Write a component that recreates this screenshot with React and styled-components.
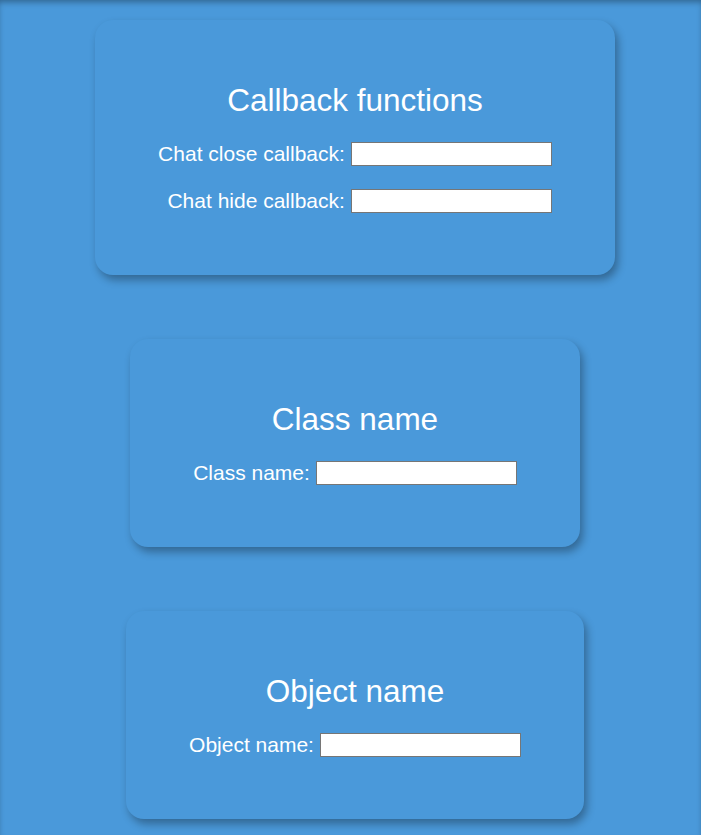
import React from "react";
import styled, { createGlobalStyle } from "styled-components";

const GlobalStyle = createGlobalStyle`
  html, body {
    margin: 0;
    padding: 0;
    background: #4a99da;
    font-family: "Liberation Sans", Arial, sans-serif;
  }
`;

const sections = [
  {
    title: "Callback functions",
    fields: ["Chat close callback:", "Chat hide callback:"],
  },
  { title: "Class name", fields: ["Class name:"] },
  { title: "Object name", fields: ["Object name:"] },
];

export default function App() {
  return (
    <Page>
      <GlobalStyle />
      {sections.map((s) => (
        <Card key={s.title}>
          <Title>{s.title}</Title>
          <Fields>
            {s.fields.map((f) => (
              <React.Fragment key={f}>
                <Label>{f}</Label>
                <Input type="text" />
              </React.Fragment>
            ))}
          </Fields>
        </Card>
      ))}
    </Page>
  );
}

const Page = styled.div`
  min-height: 835px;
  box-sizing: border-box;
  padding: 20px 0 16px 9px;
  display: flex;
  flex-direction: column;
  align-items: center;
  gap: 64px;
  background: #4a99da;
  box-shadow: inset 0 4px 6px -2px rgba(0, 0, 0, 0.35);
`;

const Card = styled.div`
  box-sizing: border-box;
  padding: 62px 63px 62px;
  border-radius: 18px;
  background: #4a99da;
  box-shadow: 3px 5px 9px rgba(0, 0, 0, 0.32);
  color: #fff;
`;

const Title = styled.h2`
  margin: 0 0 24px;
  font-size: 31.5px;
  font-weight: 400;
  line-height: 36px;
  text-align: center;
  color: #fff;
`;

const Fields = styled.div`
  display: grid;
  grid-template-columns: auto auto;
  column-gap: 6px;
  row-gap: 23px;
  align-items: center;
`;

const Label = styled.label`
  justify-self: end;
  font-size: 21px;
  line-height: 22px;
  color: #fff;
  white-space: nowrap;
`;

const Input = styled.input`
  box-sizing: border-box;
  width: 201px;
  height: 24px;
  margin: 0;
  padding: 0 2px;
  border: 1px solid #767676;
  background: #fff;
  font-family: "Liberation Sans", Arial, sans-serif;
`;
